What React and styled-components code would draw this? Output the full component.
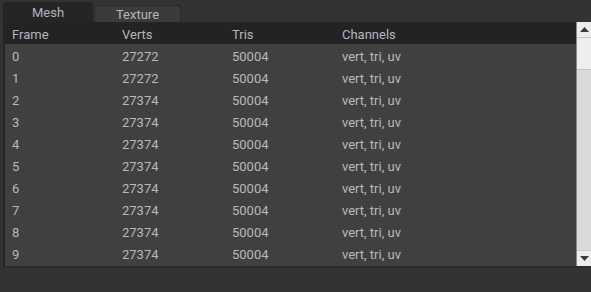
import React from "react";
import styled, { createGlobalStyle } from "styled-components";

const GlobalStyle = createGlobalStyle`
  html, body {
    margin: 0;
    padding: 0;
    background: #333333;
  }
  * {
    box-sizing: border-box;
  }
`;

const frames = [
  { frame: 0, verts: 27272 },
  { frame: 1, verts: 27272 },
  { frame: 2, verts: 27374 },
  { frame: 3, verts: 27374 },
  { frame: 4, verts: 27374 },
  { frame: 5, verts: 27374 },
  { frame: 6, verts: 27374 },
  { frame: 7, verts: 27374 },
  { frame: 8, verts: 27374 },
  { frame: 9, verts: 27374 },
];

export default function App() {
  return (
    <>
      <GlobalStyle />
      <Window>
        <TabBar>
          <Tab $active>Mesh</Tab>
          <Tab>Texture</Tab>
        </TabBar>
        <Panel>
          <Table>
            <HeaderRow>
              <Cell>Frame</Cell>
              <Cell>Verts</Cell>
              <Cell>Tris</Cell>
              <Cell>Channels</Cell>
            </HeaderRow>
            {frames.map((f) => (
              <Row key={f.frame}>
                <Cell>{f.frame}</Cell>
                <Cell>{f.verts}</Cell>
                <Cell>50004</Cell>
                <Cell>vert, tri, uv</Cell>
              </Row>
            ))}
          </Table>
          <ScrollBar>
            <ScrollButton>
              <Arrow viewBox="0 0 9 5">
                <path d="M4.5 0 L9 5 L0 5 Z" />
              </Arrow>
            </ScrollButton>
            <Track>
              <Thumb />
            </Track>
            <ScrollButton>
              <Arrow viewBox="0 0 9 5">
                <path d="M0 0 L9 0 L4.5 5 Z" />
              </Arrow>
            </ScrollButton>
          </ScrollBar>
        </Panel>
      </Window>
    </>
  );
}

/*::::: STYLES :::::*/
const Window = styled.div`
  width: 591px;
  height: 292px;
  background: #333333;
  padding-top: 2px;
  font-family: Roboto, "Liberation Sans", sans-serif;
  overflow: hidden;
`;

const TabBar = styled.div`
  display: flex;
  align-items: flex-end;
  height: 20px;
  padding-left: 3px;
`;

const Tab = styled.div`
  height: ${(p) => (p.$active ? "20px" : "17px")};
  width: ${(p) => (p.$active ? "90px" : "87px")};
  margin-left: ${(p) => (p.$active ? "0" : "1px")};
  display: flex;
  align-items: center;
  justify-content: center;
  font-size: 13px;
  color: #aeb6bf;
  background: ${(p) => (p.$active ? "#252525" : "#3b3b3b")};
  border: ${(p) => (p.$active ? "none" : "1px solid #2a2a2a")};
  border-bottom: none;
  border-radius: 3px 3px 0 0;
`;

const Panel = styled.div`
  display: flex;
  margin-left: 3px;
  height: 246px;
  border-left: 2px solid #252525;
  border-bottom: 2px solid #2d2d2d;
  background: #404040;
`;

const Table = styled.div`
  flex: 1;
  display: flex;
  flex-direction: column;
`;

const Row = styled.div`
  display: grid;
  grid-template-columns: 110px 110px 110px 1fr;
  height: 22px;
  align-items: center;
  padding-left: 7px;
  padding-top: 2px;
  font-size: 13px;
  color: #b9b9b9;
`;

const HeaderRow = styled(Row)`
  background: #232323;
  color: #b4b8bd;
`;

const Cell = styled.div`
  white-space: nowrap;
`;

const ScrollBar = styled.div`
  width: 15px;
  display: flex;
  flex-direction: column;
  background: #dcdcdc;
  border-left: 1px solid #8a8a8a;
`;

const ScrollButton = styled.div`
  height: 16px;
  display: flex;
  align-items: center;
  justify-content: center;
  background: #ececec;
  border-bottom: 1px solid #c8c8c8;
  &:last-child {
    border-bottom: none;
    border-top: 1px solid #c8c8c8;
  }
`;

const Arrow = styled.svg`
  width: 9px;
  height: 5px;
  fill: #3a3a3a;
`;

const Track = styled.div`
  flex: 1;
  background: #dadada;
`;

const Thumb = styled.div`
  height: 32px;
  background: #eeeeee;
  border-bottom: 1px solid #c4c4c4;
`;
